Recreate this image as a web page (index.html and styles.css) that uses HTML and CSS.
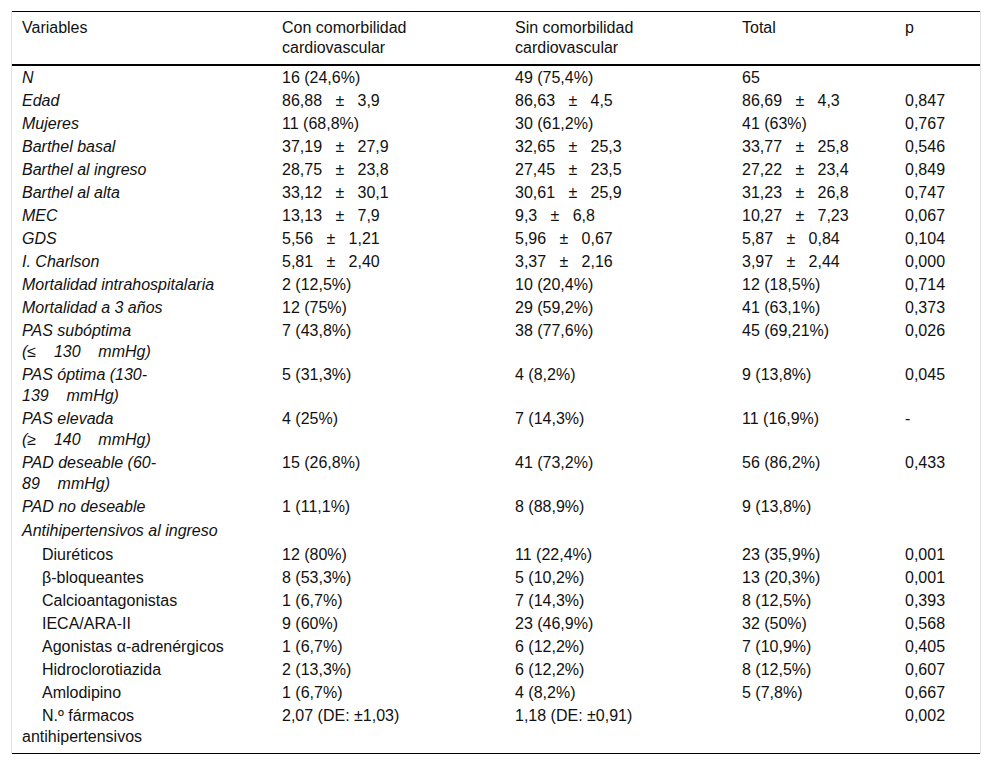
FILE: index.html
```html
<!DOCTYPE html>
<html lang="es">
<head>
<meta charset="utf-8">
<title>Tabla</title>
<link rel="stylesheet" href="styles.css">
</head>
<body>
<div class="frame">
<table class="data">
<colgroup>
<col class="c1"><col class="c2"><col class="c3"><col class="c4"><col class="c5">
</colgroup>
<thead>
<tr>
<th>Variables</th>
<th>Con comorbilidad<br>cardiovascular</th>
<th>Sin comorbilidad<br>cardiovascular</th>
<th>Total</th>
<th>p</th>
</tr>
</thead>
<tbody>
<tr><td class="v">N</td><td>16 (24,6%)</td><td>49 (75,4%)</td><td>65</td><td></td></tr>
<tr><td class="v">Edad</td><td>86,88&nbsp;&nbsp; ±&nbsp;&nbsp; 3,9</td><td>86,63&nbsp;&nbsp; ±&nbsp;&nbsp; 4,5</td><td>86,69&nbsp;&nbsp; ±&nbsp;&nbsp; 4,3</td><td>0,847</td></tr>
<tr><td class="v">Mujeres</td><td>11 (68,8%)</td><td>30 (61,2%)</td><td>41 (63%)</td><td>0,767</td></tr>
<tr><td class="v">Barthel basal</td><td>37,19&nbsp;&nbsp; ±&nbsp;&nbsp; 27,9</td><td>32,65&nbsp;&nbsp; ±&nbsp;&nbsp; 25,3</td><td>33,77&nbsp;&nbsp; ±&nbsp;&nbsp; 25,8</td><td>0,546</td></tr>
<tr><td class="v">Barthel al ingreso</td><td>28,75&nbsp;&nbsp; ±&nbsp;&nbsp; 23,8</td><td>27,45&nbsp;&nbsp; ±&nbsp;&nbsp; 23,5</td><td>27,22&nbsp;&nbsp; ±&nbsp;&nbsp; 23,4</td><td>0,849</td></tr>
<tr><td class="v">Barthel al alta</td><td>33,12&nbsp;&nbsp; ±&nbsp;&nbsp; 30,1</td><td>30,61&nbsp;&nbsp; ±&nbsp;&nbsp; 25,9</td><td>31,23&nbsp;&nbsp; ±&nbsp;&nbsp; 26,8</td><td>0,747</td></tr>
<tr><td class="v">MEC</td><td>13,13&nbsp;&nbsp; ±&nbsp;&nbsp; 7,9</td><td>9,3&nbsp;&nbsp; ±&nbsp;&nbsp; 6,8</td><td>10,27&nbsp;&nbsp; ±&nbsp;&nbsp; 7,23</td><td>0,067</td></tr>
<tr><td class="v">GDS</td><td>5,56&nbsp;&nbsp; ±&nbsp;&nbsp; 1,21</td><td>5,96&nbsp;&nbsp; ±&nbsp;&nbsp; 0,67</td><td>5,87&nbsp;&nbsp; ±&nbsp;&nbsp; 0,84</td><td>0,104</td></tr>
<tr><td class="v">I. Charlson</td><td>5,81&nbsp;&nbsp; ±&nbsp;&nbsp; 2,40</td><td>3,37&nbsp;&nbsp; ±&nbsp;&nbsp; 2,16</td><td>3,97&nbsp;&nbsp; ±&nbsp;&nbsp; 2,44</td><td>0,000</td></tr>
<tr><td class="v">Mortalidad intrahospitalaria</td><td>2 (12,5%)</td><td>10 (20,4%)</td><td>12 (18,5%)</td><td>0,714</td></tr>
<tr><td class="v">Mortalidad a 3 años</td><td>12 (75%)</td><td>29 (59,2%)</td><td>41 (63,1%)</td><td>0,373</td></tr>
<tr><td class="v">PAS subóptima<br>(≤&nbsp;&nbsp;&nbsp;&nbsp;130&nbsp;&nbsp;&nbsp;&nbsp;mmHg)</td><td>7 (43,8%)</td><td>38 (77,6%)</td><td>45 (69,21%)</td><td>0,026</td></tr>
<tr><td class="v">PAS óptima (130-<br>139&nbsp;&nbsp;&nbsp;&nbsp;mmHg)</td><td>5 (31,3%)</td><td>4 (8,2%)</td><td>9 (13,8%)</td><td>0,045</td></tr>
<tr><td class="v">PAS elevada<br>(≥&nbsp;&nbsp;&nbsp;&nbsp;140&nbsp;&nbsp;&nbsp;&nbsp;mmHg)</td><td>4 (25%)</td><td>7 (14,3%)</td><td>11 (16,9%)</td><td>-</td></tr>
<tr><td class="v">PAD deseable (60-<br>89&nbsp;&nbsp;&nbsp;&nbsp;mmHg)</td><td>15 (26,8%)</td><td>41 (73,2%)</td><td>56 (86,2%)</td><td>0,433</td></tr>
<tr><td class="v">PAD no deseable</td><td>1 (11,1%)</td><td>8 (88,9%)</td><td>9 (13,8%)</td><td></td></tr>
<tr class="group"><td class="v">Antihipertensivos al ingreso</td><td></td><td></td><td></td><td></td></tr>
<tr><td class="sub">Diuréticos</td><td>12 (80%)</td><td>11 (22,4%)</td><td>23 (35,9%)</td><td>0,001</td></tr>
<tr><td class="sub">β-bloqueantes</td><td>8 (53,3%)</td><td>5 (10,2%)</td><td>13 (20,3%)</td><td>0,001</td></tr>
<tr><td class="sub">Calcioantagonistas</td><td>1 (6,7%)</td><td>7 (14,3%)</td><td>8 (12,5%)</td><td>0,393</td></tr>
<tr><td class="sub">IECA/ARA-II</td><td>9 (60%)</td><td>23 (46,9%)</td><td>32 (50%)</td><td>0,568</td></tr>
<tr><td class="sub">Agonistas α-adrenérgicos</td><td>1 (6,7%)</td><td>6 (12,2%)</td><td>7 (10,9%)</td><td>0,405</td></tr>
<tr><td class="sub">Hidroclorotiazida</td><td>2 (13,3%)</td><td>6 (12,2%)</td><td>8 (12,5%)</td><td>0,607</td></tr>
<tr><td class="sub">Amlodipino</td><td>1 (6,7%)</td><td>4 (8,2%)</td><td>5 (7,8%)</td><td>0,667</td></tr>
<tr class="last"><td class="sub">N.º fármacos<br>antihipertensivos</td><td>2,07 (DE: ±1,03)</td><td>1,18 (DE: ±0,91)</td><td></td><td>0,002</td></tr>
</tbody>
</table>
</div>
</body>
</html>
```

FILE: styles.css
```css
html, body {
  margin: 0;
  padding: 0;
  background: #fff;
}

body {
  padding: 11px 10px 0 11px;
  font-family: "Liberation Sans", Arial, sans-serif;
  font-size: 16px;
  color: #111;
}

.frame {
  width: 970px;
  border-left: 1px solid #e2e2e2;
  border-right: 1px solid #e2e2e2;
  box-sizing: border-box;
}

.data {
  width: 100%;
  border-collapse: collapse;
  table-layout: fixed;
  border-top: 1px solid #000;
  border-bottom: 1px solid #000;
}

.c1 { width: 260px; }
.c2 { width: 233px; }
.c3 { width: 227px; }
.c4 { width: 163px; }
.c5 { width: 85px; }

.data th {
  font-weight: normal;
  text-align: left;
  vertical-align: top;
  line-height: 20px;
  padding: 6px 8px 6px 10px;
  border-bottom: 2px solid #000;
}

.data th:first-child,
.data td:first-child {
  padding-left: 10px;
}

.data td {
  vertical-align: top;
  line-height: 21px;
  padding: 1px 8px 1px 10px;
  white-space: nowrap;
}

.data td.v {
  font-style: italic;
}

.data td.sub {
  text-indent: 20px;
}

.data tr.group td {
  padding-top: 2px;
  padding-bottom: 2px;
}

.data tr.last td {
  padding-bottom: 6px;
}
```
